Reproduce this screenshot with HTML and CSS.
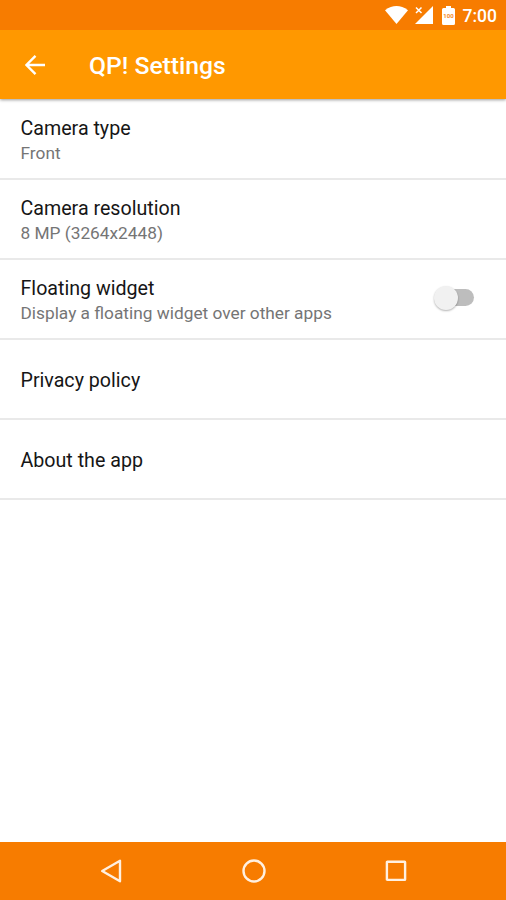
FILE: index.html
```
<!DOCTYPE html>
<html lang="en">
<head>
    <meta charset="UTF-8">
    <meta name="viewport" content="width=device-width, initial-scale=1.0">
    <title>QP! Settings</title>
    <link rel="stylesheet" href="styles.css">
</head>
<body>
    <div class="status-bar">
        <svg class="wifi" width="23" height="18" viewBox="0 0 23 18">
            <path d="M0 4.2Q11.5-4 23 4.2L11.5 18Z"/>
        </svg>
        <svg class="signal" width="18" height="18" viewBox="0 0 18 18">
            <path d="M18 0V18H0Z"/>
            <path class="cross" d="M1 1.5L6.5 7M6.5 1.5L1 7"/>
        </svg>
        <svg class="battery" width="13" height="19" viewBox="0 0 13 19">
            <path d="M4 0H9V2H11.5Q13 2 13 3.5V17.5Q13 19 11.5 19H1.5Q0 19 0 17.5V3.5Q0 2 1.5 2H4Z"/>
            <text x="6.5" y="11.5">100</text>
        </svg>
        <span class="clock">7:00</span>
    </div>

    <header class="app-bar">
        <svg class="back" width="20" height="20" viewBox="0 0 20 20">
            <path d="M20 10H1.5M10.5 .9L1.4 10L10.5 19.1"/>
        </svg>
        <h1>QP! Settings</h1>
    </header>

    <main class="settings">
        <div class="item">
            <div>
                <div class="title">Camera type</div>
                <div class="summary">Front</div>
            </div>
        </div>
        <div class="item">
            <div>
                <div class="title">Camera resolution</div>
                <div class="summary">8 MP (3264x2448)</div>
            </div>
        </div>
        <div class="item">
            <div>
                <div class="title">Floating widget</div>
                <div class="summary">Display a floating widget over other apps</div>
            </div>
            <div class="switch"><div class="thumb"></div></div>
        </div>
        <div class="item">
            <div class="title">Privacy policy</div>
        </div>
        <div class="item">
            <div class="title">About the app</div>
        </div>
    </main>

    <nav class="nav-bar">
        <svg width="24" height="24" viewBox="0 0 24 24"><path d="M20 1.8V22.2L2.2 12Z"/></svg>
        <svg width="24" height="24" viewBox="0 0 24 24"><circle cx="12" cy="12" r="10.5"/></svg>
        <svg width="24" height="24" viewBox="0 0 24 24"><rect x="2.9" y="2.7" width="18.2" height="18.2" rx=".5"/></svg>
    </nav>
</body>
</html>
```

FILE: styles.css
```
* {
    box-sizing: border-box;
}

body {
    margin: 0;
    height: 900px;
    display: flex;
    flex-direction: column;
    font-family: Roboto, "Liberation Sans", sans-serif;
    background: #fff;
    overflow: hidden;
}

.status-bar {
    height: 30px;
    display: flex;
    align-items: center;
    justify-content: flex-end;
    padding-right: 9px;
    background: #f77c00;
    color: #fff;
    fill: #fff;
    position: relative;
    z-index: 2;
}

.signal {
    margin-left: 7px;
}

.signal .cross {
    stroke: #fff;
    stroke-width: 1.5;
}

.battery {
    margin-left: 9px;
}

.battery text {
    fill: #f78a25;
    font-size: 6px;
    font-weight: 700;
    text-anchor: middle;
}

.clock {
    margin-left: 8px;
    padding-top: 2px;
    font-size: 17.5px;
    font-weight: 500;
}

.app-bar {
    height: 69px;
    display: flex;
    align-items: center;
    padding-left: 25px;
    background: #ff9800;
    color: #fff;
    box-shadow: 0 1px 3px rgba(0, 0, 0, 0.4);
    z-index: 1;
}

.back {
    fill: none;
    stroke: #fff;
    stroke-width: 2.4;
}

.app-bar h1 {
    margin: 2px 0 0 44px;
    font-size: 24.7px;
    font-weight: 500;
}

.settings {
    flex: 1;
}

.item {
    height: 80px;
    display: flex;
    align-items: center;
    justify-content: space-between;
    padding: 4px 32px 0 20.5px;
    border-bottom: 2px solid #e9e9e9;
}

.item:first-child {
    height: 81px;
    padding-top: 5px;
}

.title {
    font-size: 19.65px;
    line-height: 26px;
    color: #161616;
}

.summary {
    margin: -1px 0 1px;
    font-size: 17.3px;
    line-height: 24px;
    color: #757575;
}

.switch {
    display: flex;
    align-items: center;
    width: 40px;
    height: 17px;
    margin-bottom: 7px;
    border-radius: 9px;
    background: linear-gradient(90deg, transparent 12px, #bdbdbd 12px);
}

.thumb {
    flex: none;
    width: 24px;
    height: 24px;
    border-radius: 50%;
    background: #f1f1f1;
    box-shadow: 0 1px 2px rgba(0, 0, 0, 0.3);
}

.nav-bar {
    height: 58px;
    display: flex;
    align-items: center;
    justify-content: center;
    gap: 118px;
    padding-left: 2px;
    background: #f77c00;
}

.nav-bar svg {
    fill: none;
    stroke: #fff0e0;
    stroke-width: 2.4;
    stroke-linejoin: round;
}
```
